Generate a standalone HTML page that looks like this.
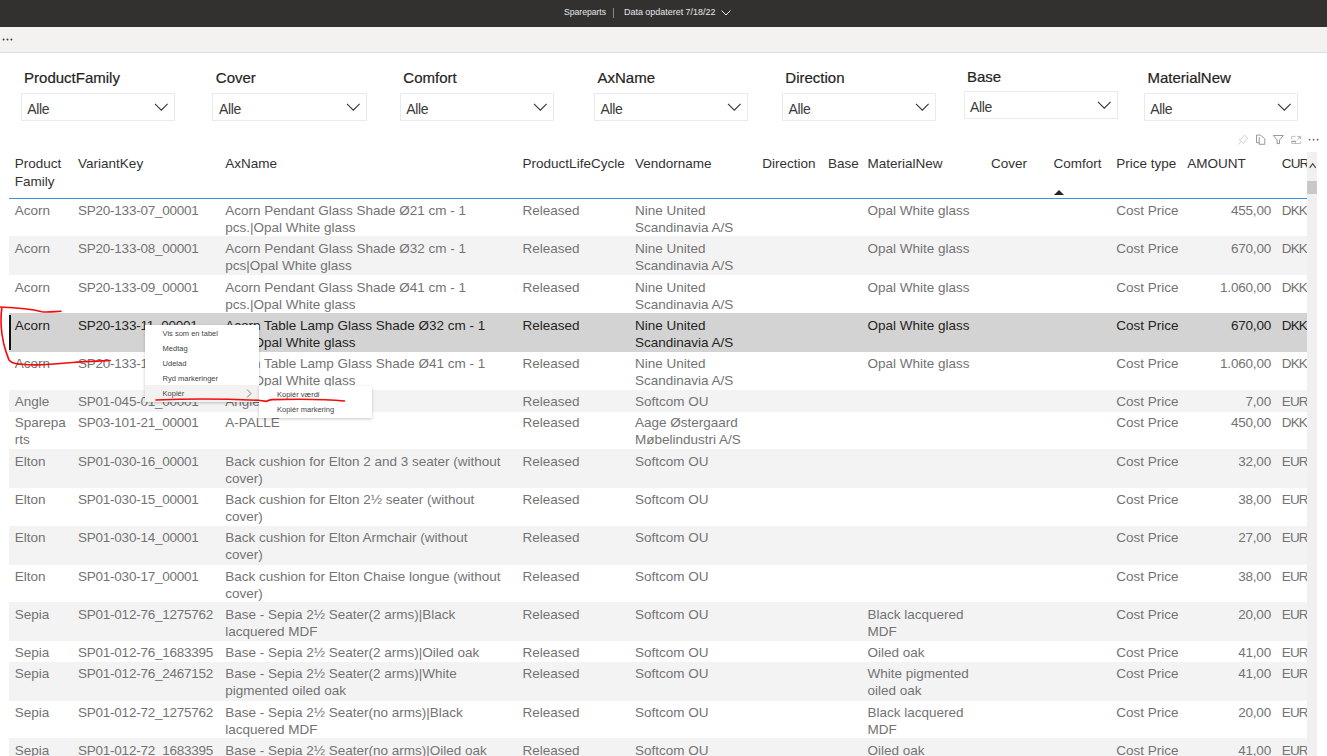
<!DOCTYPE html>
<html><head><meta charset="utf-8">
<style>
*{box-sizing:border-box}
html,body{margin:0;padding:0}
body{width:1327px;height:756px;overflow:hidden;position:relative;background:#fff;font-family:"Liberation Sans",sans-serif;}
#top{position:absolute;left:0;top:0;width:1327px;height:27px;background:#323130;color:#e8e8e8;font-size:8.8px;}
#top .t1{position:absolute;left:564px;top:6.6px;white-space:nowrap;font-size:8.6px}
#top .sep{position:absolute;left:613px;top:8.3px;width:1px;height:9.5px;background:#8a8886}
#top .t2{position:absolute;left:624px;top:6.6px;white-space:nowrap;font-size:8.95px}
#top svg{position:absolute;left:721px;top:10px}
#bar{position:absolute;left:0;top:27px;width:1327px;height:26px;background:#f3f2f1;border-bottom:1px solid #dcdcdc}
#bar .dots{position:absolute;left:2px;top:5px;font-size:9px;color:#444;letter-spacing:0.6px}
.slab{position:absolute;font-size:15px;color:#252423;white-space:nowrap;line-height:17px;-webkit-text-stroke:0.2px #252423}
.sbox{position:absolute;height:28px;border:1px solid #ebebeb;background:#fff}
.sbox .alle{position:absolute;left:5.5px;top:8px;font-size:14px;line-height:15px;color:#3b3a39;letter-spacing:-0.35px}
.sbox .chev{position:absolute;right:6px;top:9px}
.h{position:absolute;top:155px;font-size:13.5px;line-height:17.9px;color:#333;white-space:nowrap}
#hline{position:absolute;left:9.3px;top:198px;width:1298px;height:1px;background:#3a96e0;z-index:5}
.row{position:absolute;left:9.3px;width:1298px;overflow:hidden;z-index:2}
.rbg{position:absolute;left:9.3px;width:1298px}
.rbg.w{background:#fff}
.rbg.g{background:#f3f3f3;z-index:1}
.rbg.s{background:#d3d3d3;z-index:1}
.c{position:absolute;top:3.3px;font-size:13.5px;line-height:17.3px;color:#737373;white-space:nowrap}
.row.sel .c{color:#252423}
.c.r{text-align:right;letter-spacing:-0.2px}
.c.dg{letter-spacing:-0.25px}
.c.cu{letter-spacing:-0.9px}
.h.cu{letter-spacing:-0.9px}
.selbar{position:absolute;left:-0.3px;top:1.6px;width:2px;height:35px;background:#111}
#sb{z-index:6;position:absolute;left:1307.3px;top:152.4px;width:9.6px;height:604px;background:#f0f0f0}
#thumb{z-index:7;position:absolute;left:1307.3px;top:180.6px;width:9.6px;height:13px;background:#c8c8c8}
#sbup{z-index:7;position:absolute;left:1307.5px;top:162px}
#sorttri{position:absolute;left:1053.6px;top:189.7px;width:0;height:0;border-left:5px solid transparent;border-right:5px solid transparent;border-bottom:5px solid #252423}
#icons svg{position:absolute}
#menu{z-index:10;position:absolute;left:145.4px;top:325px;width:114px;height:76.5px;background:#fff;box-shadow:0 1px 3px rgba(0,0,0,0.22)}
#menu .mi{position:absolute;left:17.2px;font-size:7.5px;color:#444;white-space:nowrap;line-height:9px}
#menu .hl{position:absolute;left:0;top:60px;width:114px;height:16.5px;background:#f3f2f1}
#sub{z-index:10;position:absolute;left:259.4px;top:386px;width:113px;height:31.7px;background:#fff;box-shadow:0 1px 3px rgba(0,0,0,0.22)}
#sub .mi{position:absolute;left:17.6px;font-size:7.5px;color:#444;white-space:nowrap;line-height:9px}
#ann{z-index:11;position:absolute;left:0;top:0}
</style></head><body>
<div id="top"><span class="t1">Spareparts</span><span class="sep"></span><span class="t2">Data opdateret 7/18/22</span>
<svg width="10" height="6" viewBox="0 0 10 6"><path d="M0.5 0.5 L5 5 L9.5 0.5" fill="none" stroke="#e8e8e8" stroke-width="1"/></svg></div>
<div id="bar"><svg style="position:absolute;left:0;top:0" width="20" height="25" viewBox="0 0 20 25"><circle cx="3.6" cy="12.5" r="0.95" fill="#3b3a39"/><circle cx="7.5" cy="12.5" r="0.95" fill="#3b3a39"/><circle cx="11.4" cy="12.5" r="0.95" fill="#3b3a39"/></svg></div>
<div class="slab" style="left:24.1px;top:69.3px">ProductFamily</div><div class="sbox" style="left:20.8px;top:92.8px;width:154.0px"><span class="alle">Alle</span><svg class="chev" width="14" height="8" viewBox="0 0 14 8"><path d="M1 0.9 L7.3 7.2 L13.6 0.9" fill="none" stroke="#333" stroke-width="1.05"/></svg></div><div class="slab" style="left:215.8px;top:69.3px">Cover</div><div class="sbox" style="left:212.4px;top:92.8px;width:154.5px"><span class="alle">Alle</span><svg class="chev" width="14" height="8" viewBox="0 0 14 8"><path d="M1 0.9 L7.3 7.2 L13.6 0.9" fill="none" stroke="#333" stroke-width="1.05"/></svg></div><div class="slab" style="left:403.3px;top:69.3px">Comfort</div><div class="sbox" style="left:399.8px;top:92.8px;width:154.3px"><span class="alle">Alle</span><svg class="chev" width="14" height="8" viewBox="0 0 14 8"><path d="M1 0.9 L7.3 7.2 L13.6 0.9" fill="none" stroke="#333" stroke-width="1.05"/></svg></div><div class="slab" style="left:597.5px;top:69.3px">AxName</div><div class="sbox" style="left:594.0px;top:92.8px;width:154.2px"><span class="alle">Alle</span><svg class="chev" width="14" height="8" viewBox="0 0 14 8"><path d="M1 0.9 L7.3 7.2 L13.6 0.9" fill="none" stroke="#333" stroke-width="1.05"/></svg></div><div class="slab" style="left:785.3px;top:69.3px">Direction</div><div class="sbox" style="left:782.0px;top:92.8px;width:154.2px"><span class="alle">Alle</span><svg class="chev" width="14" height="8" viewBox="0 0 14 8"><path d="M1 0.9 L7.3 7.2 L13.6 0.9" fill="none" stroke="#333" stroke-width="1.05"/></svg></div><div class="slab" style="left:966.9px;top:67.7px">Base</div><div class="sbox" style="left:963.5px;top:91.2px;width:154.5px"><span class="alle">Alle</span><svg class="chev" width="14" height="8" viewBox="0 0 14 8"><path d="M1 0.9 L7.3 7.2 L13.6 0.9" fill="none" stroke="#333" stroke-width="1.05"/></svg></div><div class="slab" style="left:1147.5px;top:69.3px">MaterialNew</div><div class="sbox" style="left:1143.7px;top:92.8px;width:154.1px"><span class="alle">Alle</span><svg class="chev" width="14" height="8" viewBox="0 0 14 8"><path d="M1 0.9 L7.3 7.2 L13.6 0.9" fill="none" stroke="#333" stroke-width="1.05"/></svg></div>
<div id="icons"><svg style="left:1230px;top:128px" width="97" height="24" viewBox="0 0 97 24">
<g fill="none" stroke-linejoin="round">
<path d="M9.2 11.4 L11.6 10.7 L14.4 7.1 L17.8 10.3 L14.3 13.2 L13.5 15.5 Z M11.3 13.4 L8.1 16.6" stroke="#c8c6c4" stroke-width="0.8"/>
<path d="M26.5 7.1 H30.6 L34.8 10.9 V16.3 H29.2 V14.7 H26.5 Z M29.2 14.7 V9" stroke="#8a8886" stroke-width="0.85"/>
<path d="M43.3 7.5 H53.3 L49.5 12 V15.6 H47.1 V12 Z" stroke="#8a8886" stroke-width="0.85"/>
<path d="M61.7 11.5 V8.4 H65.5 M67.1 8.4 H70.7 V11.5 M70.7 13.3 V15.5 H61.7 V13.4 M61.7 13.4 H65.6 V15.5 M67.4 11.7 L70 9.1 M68.2 9 H70.1 V10.9" stroke="#b3b0ad" stroke-width="0.8"/>
<path d="M61.7 13.4 H65.8" stroke="#8a8886" stroke-width="0.9"/>
</g>
<circle cx="79.6" cy="11.7" r="0.85" fill="#605e5c"/><circle cx="83.6" cy="11.7" r="0.85" fill="#605e5c"/><circle cx="87.6" cy="11.7" r="0.85" fill="#605e5c"/>
</svg></div>
<div class="h" style="left:14.8px">Product<br>Family</div><div class="h" style="left:78.1px">VariantKey</div><div class="h" style="left:225.2px">AxName</div><div class="h" style="left:522.6px">ProductLifeCycle</div><div class="h" style="left:635.0px">Vendorname</div><div class="h" style="left:762.2px">Direction</div><div class="h" style="left:828.0px">Base</div><div class="h" style="left:867.5px">MaterialNew</div><div class="h" style="left:991.0px">Cover</div><div class="h" style="left:1053.6px">Comfort</div><div class="h" style="left:1116.2px">Price type</div><div class="h" style="left:1187.3px">AMOUNT</div><div class="h cu" style="left:1281.8px">CUR</div>
<div id="sorttri"></div>
<div id="hline"></div>
<div class="rbg w" style="top:198.20px;height:38.30px"></div><div class="rbg g" style="top:236.30px;height:39.20px"></div><div class="rbg w" style="top:274.80px;height:38.30px"></div><div class="rbg s" style="top:312.90px;height:39.20px"></div><div class="rbg w" style="top:351.40px;height:38.30px"></div><div class="rbg g" style="top:389.50px;height:22.00px"></div><div class="rbg w" style="top:410.80px;height:38.30px"></div><div class="rbg g" style="top:448.90px;height:39.20px"></div><div class="rbg w" style="top:487.40px;height:38.30px"></div><div class="rbg g" style="top:525.50px;height:39.20px"></div><div class="rbg w" style="top:564.00px;height:38.30px"></div><div class="rbg g" style="top:602.10px;height:39.20px"></div><div class="rbg w" style="top:640.60px;height:21.10px"></div><div class="rbg g" style="top:661.50px;height:39.20px"></div><div class="rbg w" style="top:700.00px;height:38.30px"></div><div class="rbg g" style="top:738.10px;height:22.00px"></div><div class="row" style="top:198.70px;height:38.30px"><div class="c" style="left:5.5px">Acorn</div><div class="c dg" style="left:68.8px">SP20-133-07_00001</div><div class="c" style="left:215.9px">Acorn Pendant Glass Shade Ø21 cm - 1<br>pcs.|Opal White glass</div><div class="c" style="left:513.3px">Released</div><div class="c" style="left:625.7px">Nine United<br>Scandinavia A/S</div><div class="c" style="left:858.2px">Opal White glass</div><div class="c" style="left:1106.9px">Cost Price</div><div class="c r" style="right:36.3px">455,00</div><div class="c cu" style="left:1272.5px">DKK</div></div><div class="row" style="top:236.70px;height:38.30px"><div class="c" style="left:5.5px">Acorn</div><div class="c dg" style="left:68.8px">SP20-133-08_00001</div><div class="c" style="left:215.9px">Acorn Pendant Glass Shade Ø32 cm - 1<br>pcs|Opal White glass</div><div class="c" style="left:513.3px">Released</div><div class="c" style="left:625.7px">Nine United<br>Scandinavia A/S</div><div class="c" style="left:858.2px">Opal White glass</div><div class="c" style="left:1106.9px">Cost Price</div><div class="c r" style="right:36.3px">670,00</div><div class="c cu" style="left:1272.5px">DKK</div></div><div class="row" style="top:275.70px;height:38.30px"><div class="c" style="left:5.5px">Acorn</div><div class="c dg" style="left:68.8px">SP20-133-09_00001</div><div class="c" style="left:215.9px">Acorn Pendant Glass Shade Ø41 cm - 1<br>pcs.|Opal White glass</div><div class="c" style="left:513.3px">Released</div><div class="c" style="left:625.7px">Nine United<br>Scandinavia A/S</div><div class="c" style="left:858.2px">Opal White glass</div><div class="c" style="left:1106.9px">Cost Price</div><div class="c r" style="right:36.3px">1.060,00</div><div class="c cu" style="left:1272.5px">DKK</div></div><div class="row sel" style="top:313.70px;height:38.30px"><div class="selbar"></div><div class="c" style="left:5.5px">Acorn</div><div class="c dg" style="left:68.8px">SP20-133-11_00001</div><div class="c" style="left:215.9px">Acorn Table Lamp Glass Shade Ø32 cm - 1<br>pcs.|Opal White glass</div><div class="c" style="left:513.3px">Released</div><div class="c" style="left:625.7px">Nine United<br>Scandinavia A/S</div><div class="c" style="left:858.2px">Opal White glass</div><div class="c" style="left:1106.9px">Cost Price</div><div class="c r" style="right:36.3px">670,00</div><div class="c cu" style="left:1272.5px">DKK</div></div><div class="row" style="top:351.70px;height:38.30px"><div class="c" style="left:5.5px">Acorn</div><div class="c dg" style="left:68.8px">SP20-133-12_00001</div><div class="c" style="left:215.9px">Acorn Table Lamp Glass Shade Ø41 cm - 1<br>pcs.|Opal White glass</div><div class="c" style="left:513.3px">Released</div><div class="c" style="left:625.7px">Nine United<br>Scandinavia A/S</div><div class="c" style="left:858.2px">Opal White glass</div><div class="c" style="left:1106.9px">Cost Price</div><div class="c r" style="right:36.3px">1.060,00</div><div class="c cu" style="left:1272.5px">DKK</div></div><div class="row" style="top:389.70px;height:21.10px"><div class="c" style="left:5.5px">Angle</div><div class="c dg" style="left:68.8px">SP01-045-01_00001</div><div class="c" style="left:215.9px">Angle</div><div class="c" style="left:513.3px">Released</div><div class="c" style="left:625.7px">Softcom OU</div><div class="c" style="left:1106.9px">Cost Price</div><div class="c r" style="right:36.3px">7,00</div><div class="c cu" style="left:1272.5px">EUR</div></div><div class="row" style="top:410.70px;height:38.30px"><div class="c" style="left:5.5px">Sparepa<br>rts</div><div class="c dg" style="left:68.8px">SP03-101-21_00001</div><div class="c" style="left:215.9px">A-PALLE</div><div class="c" style="left:513.3px">Released</div><div class="c" style="left:625.7px">Aage Østergaard<br>Møbelindustri A/S</div><div class="c" style="left:1106.9px">Cost Price</div><div class="c r" style="right:36.3px">450,00</div><div class="c cu" style="left:1272.5px">DKK</div></div><div class="row" style="top:449.70px;height:38.30px"><div class="c" style="left:5.5px">Elton</div><div class="c dg" style="left:68.8px">SP01-030-16_00001</div><div class="c" style="left:215.9px">Back cushion for Elton 2 and 3 seater (without<br>cover)</div><div class="c" style="left:513.3px">Released</div><div class="c" style="left:625.7px">Softcom OU</div><div class="c" style="left:1106.9px">Cost Price</div><div class="c r" style="right:36.3px">32,00</div><div class="c cu" style="left:1272.5px">EUR</div></div><div class="row" style="top:487.70px;height:38.30px"><div class="c" style="left:5.5px">Elton</div><div class="c dg" style="left:68.8px">SP01-030-15_00001</div><div class="c" style="left:215.9px">Back cushion for Elton 2½ seater (without<br>cover)</div><div class="c" style="left:513.3px">Released</div><div class="c" style="left:625.7px">Softcom OU</div><div class="c" style="left:1106.9px">Cost Price</div><div class="c r" style="right:36.3px">38,00</div><div class="c cu" style="left:1272.5px">EUR</div></div><div class="row" style="top:525.70px;height:38.30px"><div class="c" style="left:5.5px">Elton</div><div class="c dg" style="left:68.8px">SP01-030-14_00001</div><div class="c" style="left:215.9px">Back cushion for Elton Armchair (without<br>cover)</div><div class="c" style="left:513.3px">Released</div><div class="c" style="left:625.7px">Softcom OU</div><div class="c" style="left:1106.9px">Cost Price</div><div class="c r" style="right:36.3px">27,00</div><div class="c cu" style="left:1272.5px">EUR</div></div><div class="row" style="top:564.70px;height:38.30px"><div class="c" style="left:5.5px">Elton</div><div class="c dg" style="left:68.8px">SP01-030-17_00001</div><div class="c" style="left:215.9px">Back cushion for Elton Chaise longue (without<br>cover)</div><div class="c" style="left:513.3px">Released</div><div class="c" style="left:625.7px">Softcom OU</div><div class="c" style="left:1106.9px">Cost Price</div><div class="c r" style="right:36.3px">38,00</div><div class="c cu" style="left:1272.5px">EUR</div></div><div class="row" style="top:602.70px;height:38.30px"><div class="c" style="left:5.5px">Sepia</div><div class="c dg" style="left:68.8px">SP01-012-76_1275762</div><div class="c" style="left:215.9px">Base - Sepia 2½ Seater(2 arms)|Black<br>lacquered MDF</div><div class="c" style="left:513.3px">Released</div><div class="c" style="left:625.7px">Softcom OU</div><div class="c" style="left:858.2px">Black lacquered<br>MDF</div><div class="c" style="left:1106.9px">Cost Price</div><div class="c r" style="right:36.3px">20,00</div><div class="c cu" style="left:1272.5px">EUR</div></div><div class="row" style="top:640.70px;height:21.10px"><div class="c" style="left:5.5px">Sepia</div><div class="c dg" style="left:68.8px">SP01-012-76_1683395</div><div class="c" style="left:215.9px">Base - Sepia 2½ Seater(2 arms)|Oiled oak</div><div class="c" style="left:513.3px">Released</div><div class="c" style="left:625.7px">Softcom OU</div><div class="c" style="left:858.2px">Oiled oak</div><div class="c" style="left:1106.9px">Cost Price</div><div class="c r" style="right:36.3px">41,00</div><div class="c cu" style="left:1272.5px">EUR</div></div><div class="row" style="top:661.70px;height:38.30px"><div class="c" style="left:5.5px">Sepia</div><div class="c dg" style="left:68.8px">SP01-012-76_2467152</div><div class="c" style="left:215.9px">Base - Sepia 2½ Seater(2 arms)|White<br>pigmented oiled oak</div><div class="c" style="left:513.3px">Released</div><div class="c" style="left:625.7px">Softcom OU</div><div class="c" style="left:858.2px">White pigmented<br>oiled oak</div><div class="c" style="left:1106.9px">Cost Price</div><div class="c r" style="right:36.3px">41,00</div><div class="c cu" style="left:1272.5px">EUR</div></div><div class="row" style="top:700.70px;height:38.30px"><div class="c" style="left:5.5px">Sepia</div><div class="c dg" style="left:68.8px">SP01-012-72_1275762</div><div class="c" style="left:215.9px">Base - Sepia 2½ Seater(no arms)|Black<br>lacquered MDF</div><div class="c" style="left:513.3px">Released</div><div class="c" style="left:625.7px">Softcom OU</div><div class="c" style="left:858.2px">Black lacquered<br>MDF</div><div class="c" style="left:1106.9px">Cost Price</div><div class="c r" style="right:36.3px">20,00</div><div class="c cu" style="left:1272.5px">EUR</div></div><div class="row" style="top:738.70px;height:21.10px"><div class="c" style="left:5.5px">Sepia</div><div class="c dg" style="left:68.8px">SP01-012-72_1683395</div><div class="c" style="left:215.9px">Base - Sepia 2½ Seater(no arms)|Oiled oak</div><div class="c" style="left:513.3px">Released</div><div class="c" style="left:625.7px">Softcom OU</div><div class="c" style="left:858.2px">Oiled oak</div><div class="c" style="left:1106.9px">Cost Price</div><div class="c r" style="right:36.3px">41,00</div><div class="c cu" style="left:1272.5px">EUR</div></div>
<div id="sb"></div><div id="thumb"></div>
<svg id="sbup" width="9" height="7" viewBox="0 0 9 7"><path d="M1.7 5.9 L4.7 1.7 L7.7 5.9" fill="none" stroke="#444" stroke-width="1.15"/></svg>
<div id="menu"><div class="hl"></div>
<span class="mi" style="top:4.3px">Vis som en tabel</span>
<span class="mi" style="top:19.1px">Medtag</span>
<span class="mi" style="top:34.1px">Udelad</span>
<span class="mi" style="top:49px">Ryd markeringer</span>
<span class="mi" style="top:64px">Kopiér</span>
<svg style="position:absolute;left:101px;top:63.7px" width="6" height="9" viewBox="0 0 6 9"><path d="M1 0.5 L5 4.5 L1 8.5" fill="none" stroke="#666" stroke-width="0.8"/></svg>
</div>
<div id="sub">
<span class="mi" style="top:4.2px">Kopiér værdi</span>
<span class="mi" style="top:19.3px">Kopiér markering</span>
</div>
<svg id="ann" width="1327" height="756" viewBox="0 0 1327 756">
<path d="M0 307 C 15 307.5, 30 308.5, 42 311.8 C 48 312.5, 55 311.5, 61 311.3" fill="none" stroke="#f50a0a" stroke-width="1.6" stroke-linecap="round"/>
<path d="M1.8 308.3 C 0.8 315, 1 322, 1.2 326.3 C 1.5 333, 2.5 338, 3.6 343.2 C 5 349, 7 355, 9 360.1 C 11 362.5, 14 363.5, 16.9 363.7 C 25 364.5, 30 365, 36.2 364.9 C 50 364.5, 60 363.5, 72.3 362.5 C 85 361.5, 100 361, 110.3 360.5" fill="none" stroke="#f50a0a" stroke-width="1.6" stroke-linecap="round"/>
<path d="M156 400 C 180 399, 220 398.6, 258 400.3 L 266.6 401.3 C 268 400.5, 270 399.6, 272 399.6 C 300 399, 330 399.5, 344.5 401" fill="none" stroke="#f50a0a" stroke-width="1.6" stroke-linecap="round"/>
</svg>
</body></html>
